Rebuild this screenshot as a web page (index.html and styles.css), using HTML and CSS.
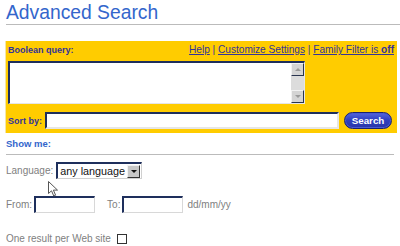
FILE: index.html
```html
<!DOCTYPE html>
<html lang="en">
<head>
  <meta charset="UTF-8" />
  <title>Advanced Search</title>
  <link rel="stylesheet" href="styles.css">
</head>
<body>

  <h1 class="title">Advanced Search</h1>

  <!-- query box -->
  <form class="query-box">
    <div class="query-head">
      <label class="box-label">Boolean query:</label>
      <div class="links">
        <a href="#">Help</a> | <a href="#">Customize Settings</a> | <a href="#">Family Filter is <b>off</b></a>
      </div>
    </div>

    <div class="query-area">
      <textarea class="query-text"></textarea>
      <div class="scrollbar">
        <span class="scroll-btn up"></span>
        <span class="scroll-btn down"></span>
      </div>
    </div>

    <div class="sort-row">
      <label class="box-label">Sort by:</label>
      <input type="text" class="sort-input">
      <button type="button" class="search-button">Search</button>
    </div>
  </form>

  <div class="show-me">Show me:</div>

  <div class="option-row lang-row">
    <span class="opt-label">Language:</span>
    <div class="select">
      <span class="select-value">any language</span>
      <span class="select-arrow"></span>
    </div>
  </div>

  <div class="option-row date-row">
    <span class="opt-label">From:</span>
    <input type="text" class="date-input">
    <span class="opt-label to-label">To:</span>
    <input type="text" class="date-input">
    <span class="opt-label">dd/mm/yy</span>
  </div>

  <div class="option-row site-row">
    <span class="opt-label">One result per Web site</span>
    <span class="checkbox"></span>
  </div>

  <!-- mouse pointer -->
  <svg class="cursor" width="11" height="16" viewBox="0 0 11 16">
    <path d="M0.5 0.5 L0.5 12.5 L3.5 9.8 L5.8 15 L7.6 14.2 L5.4 9.1 L9.5 9.1 Z" fill="#fff" stroke="#555" stroke-width="1"/>
  </svg>

</body>
</html>
```

FILE: styles.css
```css
body {
  font-family: 'Liberation Sans', Arial, sans-serif;
  margin: 0;
  padding: 0 6px;
  background: white;
  position: relative;
}

.title {
  margin: 0 -6px 16px 0;
  padding-top: 2px;
  font-size: 19.3px;
  line-height: 22px;
  font-weight: normal;
  color: #3366cc;
  border-bottom: 1px solid #bbb;
}

.query-box {
  margin: 0;
  background: #ffcc00;
  padding: 3px 2px 4px 2px;
  border-left: 1px solid #f4e6a8;
  margin-left: -1px;
  width: 387px;
}

.query-head {
  display: flex;
  justify-content: space-between;
  height: 12px;
  line-height: 12px;
}

.box-label {
  font-size: 9px;
  font-weight: bold;
  color: #333399;
}

.links {
  font-size: 10.1px;
  color: #333399;
  padding-right: 1px;
  white-space: nowrap;
}

.links a {
  color: #333399;
}

.query-area {
  display: flex;
  margin-top: 5px;
  width: 297px;
  height: 43px;
  box-sizing: border-box;
  border-top: 2px solid #1e2f5c;
  border-left: 2px solid #1e2f5c;
  border-right: 1px solid #e6e6e6;
  border-bottom: 1px solid #e6e6e6;
  background: white;
}

.query-text {
  flex: 1;
  border: none;
  resize: none;
  outline: none;
  margin: 0;
  padding: 0;
  background: white;
}

.scrollbar {
  width: 13px;
  background: #dcdcdc;
  display: flex;
  flex-direction: column;
  justify-content: space-between;
}

.scroll-btn {
  height: 13px;
  box-sizing: border-box;
  background: #d4d4d4;
  border-top: 1px solid #f2f2f2;
  border-left: 1px solid #f2f2f2;
  border-right: 1px solid #2a3550;
  border-bottom: 1px solid #2a3550;
  display: flex;
  align-items: center;
  justify-content: center;
}

.scroll-btn::after {
  content: "";
  border-left: 3px solid transparent;
  border-right: 3px solid transparent;
}

.scroll-btn.up::after {
  border-bottom: 3px solid #9a9a9a;
}

.scroll-btn.down::after {
  border-top: 3px solid #9a9a9a;
}

.sort-row {
  display: flex;
  align-items: center;
  margin-top: 8px;
  height: 17px;
}

.sort-row .box-label {
  width: 37px;
}

.sort-input {
  width: 294px;
  height: 17px;
  box-sizing: border-box;
  margin: 0 5px 0 0;
  padding: 0;
  border-top: 2px solid #1e2f5c;
  border-left: 2px solid #1e2f5c;
  border-right: 2px solid #e6e6e6;
  border-bottom: 2px solid #e6e6e6;
  background: white;
}

.search-button {
  width: 48px;
  height: 17px;
  padding: 0 0 1px 0;
  border: 1px solid #1a2270;
  border-radius: 9px;
  background: linear-gradient(to bottom, #5566dd, #3040c0 45%, #2a36a8);
  box-shadow: inset 0 0 0 1px #4a5ad0;
  color: white;
  font-family: 'Liberation Sans', Arial, sans-serif;
  font-size: 9.8px;
  font-weight: bold;
}

.show-me {
  margin-top: 5px;
  padding-bottom: 4px;
  height: 12px;
  line-height: 12px;
  font-size: 9.5px;
  font-weight: bold;
  color: #3366cc;
  border-bottom: 1px solid #bbb;
  width: 388px;
}

.option-row {
  display: flex;
  align-items: center;
  height: 17px;
}

.opt-label {
  font-size: 10px;
  color: #808080;
}

.lang-row {
  margin-top: 7px;
}

.select {
  display: flex;
  align-items: center;
  margin-left: 3px;
  width: 86px;
  height: 17px;
  box-sizing: border-box;
  border-top: 2px solid #1e2f5c;
  border-left: 2px solid #1e2f5c;
  border-right: 1px solid #d0d0d0;
  border-bottom: 1px solid #d0d0d0;
  background: white;
}

.select-value {
  flex: 1;
  padding-left: 2px;
  font-size: 10.8px;
  color: #111;
  white-space: nowrap;
}

.select-arrow {
  width: 13px;
  height: 13px;
  box-sizing: border-box;
  margin-right: 1px;
  background: #c8c8c8;
  border-top: 1px solid #f2f2f2;
  border-left: 1px solid #f2f2f2;
  border-right: 1px solid #333;
  border-bottom: 1px solid #333;
  display: flex;
  align-items: center;
  justify-content: center;
}

.select-arrow::after {
  content: "";
  border-left: 3px solid transparent;
  border-right: 3px solid transparent;
  border-top: 3px solid #111;
}

.date-row {
  margin-top: 17px;
}

.date-input {
  width: 61px;
  height: 17px;
  box-sizing: border-box;
  margin: 0 0 0 2px;
  padding: 0;
  border-top: 2px solid #1e2f5c;
  border-left: 2px solid #1e2f5c;
  border-right: 1px solid #d8d8d8;
  border-bottom: 1px solid #d8d8d8;
  background: white;
}

.to-label {
  margin-left: 12px;
}

.date-row .date-input + .opt-label:last-child {
  margin-left: 4px;
}

.site-row {
  margin-top: 17px;
}

.checkbox {
  width: 10px;
  height: 10px;
  box-sizing: border-box;
  margin-left: 6px;
  border: 1px solid #333;
  background: white;
}

.cursor {
  position: absolute;
  left: 48px;
  top: 181px;
}
```
